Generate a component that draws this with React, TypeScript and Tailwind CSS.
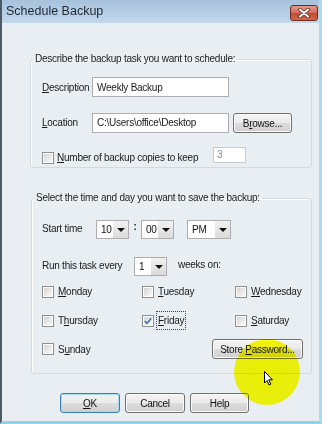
import React from "react";

const font = { fontFamily: '"Liberation Sans", Arial, sans-serif' };

function U({ children }: { children: React.ReactNode }) {
  return <span className="underline decoration-1 underline-offset-[1px]">{children}</span>;
}

function Check({ checked = false }: { checked?: boolean }) {
  return (
    <div className="w-[12px] h-[12px] border border-[#8e8f8f] bg-white p-px shrink-0">
      <div className="w-full h-full bg-[linear-gradient(135deg,#d4d4d4,#fafafa)] flex items-center justify-center">
        {checked && (
          <svg width="8" height="8" viewBox="0 0 8 8">
            <path d="M0.8 4 L3 6.4 L7.2 1.2" stroke="#3a6bb7" strokeWidth="1.5" fill="none" />
          </svg>
        )}
      </div>
    </div>
  );
}

function Combo({ value, w }: { value: string; w: string }) {
  return (
    <div className={`${w} h-[19px] border border-[#abadb3] bg-white flex items-stretch shrink-0`}>
      <div className="flex-1 flex items-center pl-[4px] text-[#111]">{value}</div>
      <div className="w-[15px] bg-[linear-gradient(#f2f2f2,#dadada)] flex items-center justify-center">
        <div className="w-0 h-0 border-l-[4px] border-r-[4px] border-t-[4px] border-l-transparent border-r-transparent border-t-[#111]" />
      </div>
    </div>
  );
}

function Btn({ children, w, def = false }: { children: React.ReactNode; w: string; def?: boolean }) {
  return (
    <div
      className={`${w} h-[20px] shrink-0 rounded-[3px] border ${
        def ? "border-[#3c7fb1] shadow-[inset_0_0_0_1px_#a8d8f4]" : "border-[#707070] shadow-[inset_0_0_0_1px_#fbfbfb]"
      } bg-[linear-gradient(#f3f3f3_0%,#ebebeb_50%,#dddddd_50%,#cfcfcf_100%)] flex items-center justify-center text-[#111] whitespace-nowrap`}
    >
      <span className="whitespace-pre">{children}</span>
    </div>
  );
}

function Day({ label, checked = false, focus = false }: { label: React.ReactNode; checked?: boolean; focus?: boolean }) {
  return (
    <div className="flex items-center gap-[3px] whitespace-nowrap">
      <Check checked={checked} />
      <span className={`px-[1px] leading-[15px] ${focus ? "outline outline-1 outline-dotted outline-[#444] py-[1px]" : ""}`}>{label}</span>
    </div>
  );
}

export default function App() {
  return (
    <div
      style={font}
      className="relative w-[322px] h-[424px] overflow-hidden bg-[#e9eef2] border-l-2 border-l-[#4d5966] border-r-[3px] border-r-[#a8dcee] border-b-[3px] border-b-[#8fd3e8] text-[10px] tracking-[-0.25px] text-[#1a1a1a] flex flex-col whitespace-nowrap"
    >
      {/* title bar */}
      <div className="h-[23px] shrink-0 bg-[linear-gradient(#a7c2dd,#c3d7eb)] flex items-center justify-between pl-[4px] pr-[1px]">
        <span className="text-[12.5px] tracking-normal text-[#1b2733]">Schedule Backup</span>
        <div className="w-[28px] h-[16px] mt-[2px] rounded-[3px] border border-[#6e2a20] bg-[linear-gradient(#e29a8c_0%,#d46f5d_45%,#c24a33_55%,#cf6a4c_100%)] flex items-center justify-center">
          <svg width="12" height="10" viewBox="0 0 12 10">
            <path d="M2 1.5 L10 8.5 M10 1.5 L2 8.5" stroke="#5a2a22" strokeWidth="3.6" strokeLinecap="round" />
            <path d="M2 1.5 L10 8.5 M10 1.5 L2 8.5" stroke="#ffffff" strokeWidth="2" strokeLinecap="round" />
          </svg>
        </div>
      </div>

      {/* group 1 */}
      <fieldset className="mt-[28px] ml-[28px] w-[282px] h-[117px] border border-[#d0dae2] rounded-[3px] shadow-[inset_1px_1px_0_#fff] pl-[11px]">
        <legend className="-ml-[9px] px-[2px] leading-[16px]">Describe the backup task you want to schedule:</legend>
        <div className="mt-[10px] flex items-center">
          <span className="w-[50px]"><U>D</U>escription</span>
          <div className="w-[137px] h-[20px] border border-[#abadb3] bg-white flex items-center pl-[4px]">Weekly Backup</div>
        </div>
        <div className="mt-[15px] flex items-center">
          <span className="w-[50px]"><U>L</U>ocation</span>
          <div className="w-[137px] h-[20px] border border-[#abadb3] bg-white flex items-center pl-[4px]">C:\Users\office\Desktop</div>
          <div className="ml-[4px] mt-[1px]">
            <Btn w="w-[59px]">B<U>r</U>owse...</Btn>
          </div>
        </div>
        <div className="mt-[17px] flex items-center">
          <Check />
          <span className="ml-[3px] w-[156px]"><U>N</U>umber of backup copies to keep</span>
          <div className="w-[33px] h-[16px] -mt-[6px] border border-[#c9ccd1] bg-white flex items-center pl-[3px] text-[#8a8a8a]">3</div>
        </div>
      </fieldset>

      {/* group 2 */}
      <fieldset className="mt-[22px] ml-[29px] w-[281px] h-[184px] border border-[#d0dae2] rounded-[3px] shadow-[inset_1px_1px_0_#fff] pl-[10px]">
        <legend className="-ml-[8px] px-[2px] leading-[16px]">Select the time and day you want to save the backup:</legend>
        <div className="mt-[14px] flex items-center">
          <span className="w-[54px] -mt-[3px]">Start time</span>
          <Combo value="10" w="w-[33px]" />
          <span className="w-[12px] text-center -mt-[6px] font-bold">:</span>
          <Combo value="00" w="w-[33px]" />
          <div className="w-[13px]" />
          <Combo value="PM" w="w-[44px]" />
        </div>
        <div className="mt-[18px] flex items-center">
          <span className="w-[92px] -mt-[3px]">Run this task every</span>
          <Combo value="1" w="w-[33px]" />
          <span className="ml-[11px] -mt-[5px]">weeks on:</span>
        </div>
        <div className="mt-[8px] grid grid-cols-[100px_93px_1fr] gap-y-[13px] items-center">
          <Day label={<><U>M</U>onday</>} />
          <Day label={<><U>T</U>uesday</>} />
          <Day label={<><U>W</U>ednesday</>} />
          <Day label={<>T<U>h</U>ursday</>} />
          <Day label={<><U>F</U>riday</>} checked focus />
          <Day label={<><U>S</U>aturday</>} />
        </div>
        <div className="mt-[10px] flex items-center justify-between pr-[8px]">
          <Day label={<>S<U>u</U>nday</>} />
          <Btn w="w-[91px]">Store <U>P</U>assword...</Btn>
        </div>
      </fieldset>

      {/* bottom buttons */}
      <div className="mt-[19px] ml-[58px] flex gap-[5px]">
        <Btn w="w-[60px]" def><U>O</U>K</Btn>
        <Btn w="w-[60px]">Cancel</Btn>
        <Btn w="w-[59px]">Help</Btn>
      </div>

      {/* highlight overlay */}
      <div className="absolute left-[232px] top-[339px] w-[66px] h-[66px] rounded-full mix-blend-multiply bg-[radial-gradient(circle,#ffff00_0%,#ffff10_78%,rgba(255,255,0,0)_100%)] pointer-events-none" />
      <svg className="absolute left-[262px] top-[371px]" width="10" height="16" viewBox="0 0 10 16">
        <path d="M0.5 0.5 L0.5 12 L3 9.5 L5 14 L6.8 13.2 L4.8 8.8 L8.5 8.8 Z" fill="#fff" stroke="#000" strokeWidth="1" strokeLinejoin="round" />
      </svg>
    </div>
  );
}
